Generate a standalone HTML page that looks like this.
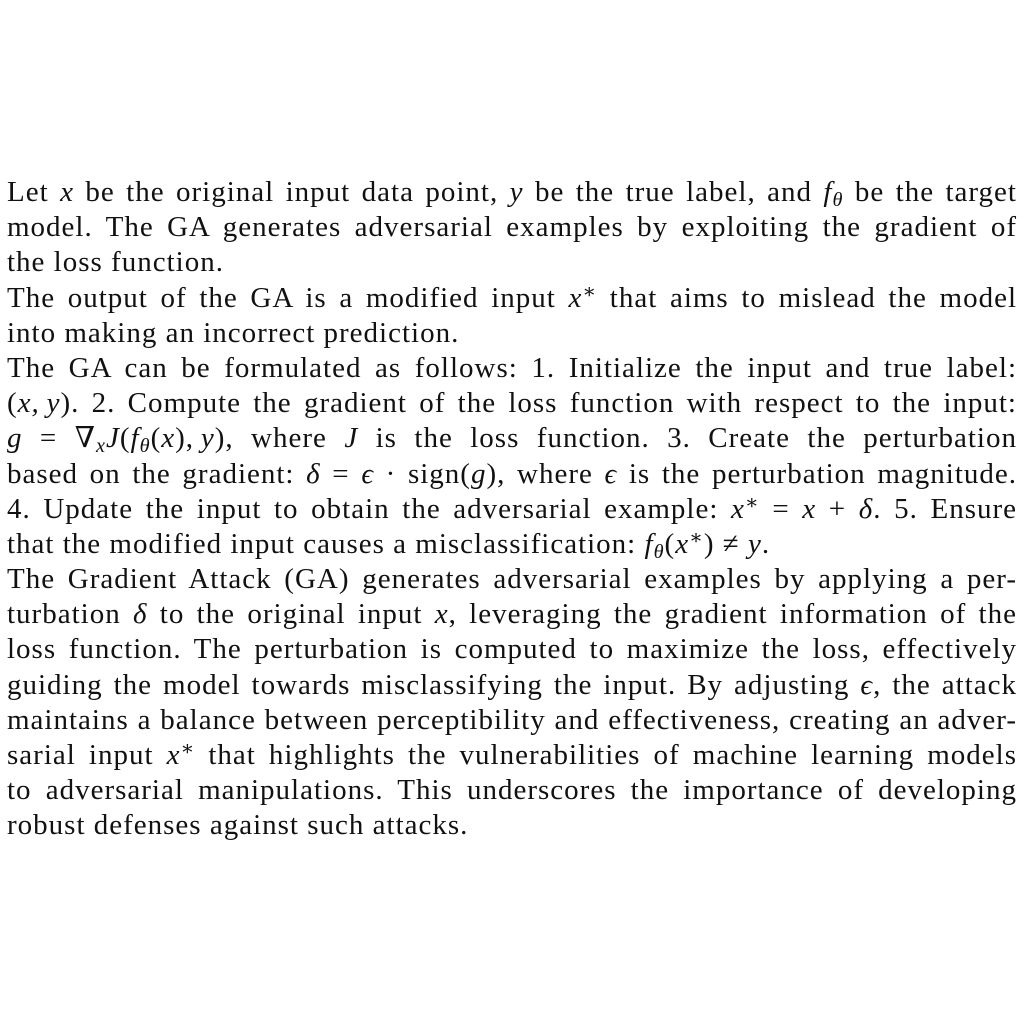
<!DOCTYPE html>
<html><head><meta charset="utf-8"><style>
html,body{margin:0;padding:0;background:#fff;}
body{width:1024px;height:1024px;position:relative;overflow:hidden;font-family:"Liberation Serif","DejaVu Serif",serif;color:#111;}
.t{position:absolute;left:7px;top:175px;width:1010px;font-size:29px;letter-spacing:1px;}
.l{height:35.2px;line-height:35.2px;text-align:justify;text-align-last:justify;white-space:nowrap;}
.l.e{text-align-last:left;}
i{font-style:italic;}
sub{font-size:0.7em;vertical-align:-0.25em;line-height:0;}
sup{font-size:0.7em;vertical-align:0.45em;line-height:0;}
</style></head><body>
<div class="t">
<div class="l">Let <i>x</i> be the original input data point, <i>y</i> be the true label, and <i>f</i><sub><i>θ</i></sub> be the target</div>
<div class="l">model. The GA generates adversarial examples by exploiting the gradient of</div>
<div class="l e">the loss function.</div>
<div class="l">The output of the GA is a modified input <i>x</i><sup>∗</sup> that aims to mislead the model</div>
<div class="l e">into making an incorrect prediction.</div>
<div class="l">The GA can be formulated as follows: 1. Initialize the input and true label:</div>
<div class="l">(<i>x,&#8201;y</i>). 2. Compute the gradient of the loss function with respect to the input:</div>
<div class="l"><i>g</i> = ∇<sub><i>x</i></sub><i>J</i>(<i>f</i><sub><i>θ</i></sub>(<i>x</i>),&#8201;<i>y</i>), where <i>J</i> is the loss function. 3. Create the perturbation</div>
<div class="l">based on the gradient: <i>δ</i> = <i>ϵ</i> · sign(<i>g</i>), where <i>ϵ</i> is the perturbation magnitude.</div>
<div class="l">4. Update the input to obtain the adversarial example: <i>x</i><sup>∗</sup> = <i>x</i> + <i>δ</i>. 5. Ensure</div>
<div class="l e">that the modified input causes a misclassification: <i>f</i><sub><i>θ</i></sub>(<i>x</i><sup>∗</sup>) ≠ <i>y</i>.</div>
<div class="l">The Gradient Attack (GA) generates adversarial examples by applying a per-</div>
<div class="l">turbation <i>δ</i> to the original input <i>x</i>, leveraging the gradient information of the</div>
<div class="l">loss function. The perturbation is computed to maximize the loss, effectively</div>
<div class="l">guiding the model towards misclassifying the input. By adjusting <i>ϵ</i>, the attack</div>
<div class="l">maintains a balance between perceptibility and effectiveness, creating an adver-</div>
<div class="l">sarial input <i>x</i><sup>∗</sup> that highlights the vulnerabilities of machine learning models</div>
<div class="l">to adversarial manipulations. This underscores the importance of developing</div>
<div class="l e">robust defenses against such attacks.</div>
</div>
</body></html>
